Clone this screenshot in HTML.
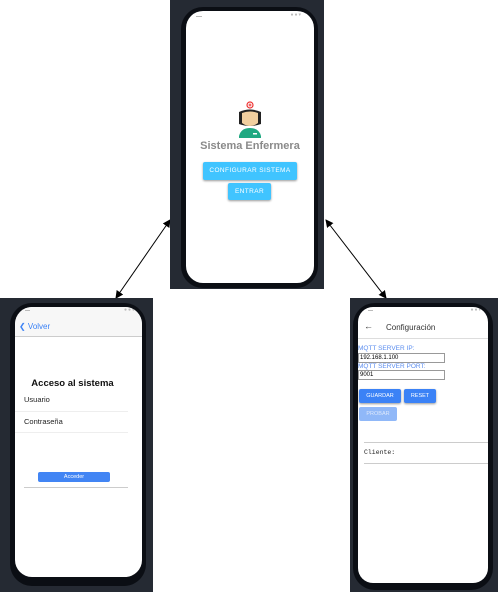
<!DOCTYPE html>
<html><head><meta charset="utf-8"><style>
body{margin:0;width:498px;height:592px;background:#fff;position:relative;overflow:hidden;font-family:"Liberation Sans",sans-serif}
.a{position:absolute}
.panel{position:absolute;background:#252a33}
.phone{position:absolute;background:#0b0e14;border-radius:22px}
.scr{position:absolute;background:#fff;border-radius:17px;overflow:hidden}
.dots{position:absolute;font-size:5px;color:#bbb;letter-spacing:1px}
</style></head><body>
<svg class="a" style="left:0;top:0" width="498" height="592">
<defs><marker id="m" markerWidth="8" markerHeight="8" refX="7" refY="4" orient="auto-start-reverse"><path d="M0,0 L8,4 L0,8 z" fill="#000"/></marker></defs>
<line x1="170" y1="220" x2="116" y2="298" stroke="#000" stroke-width="1" marker-start="url(#m)" marker-end="url(#m)"/>
<line x1="326" y1="220" x2="386" y2="298" stroke="#000" stroke-width="1" marker-start="url(#m)" marker-end="url(#m)"/>
</svg>

<!-- top -->
<div class="panel" style="left:170px;top:0;width:154px;height:289px"></div>
<div class="phone" style="left:181px;top:7px;width:137px;height:281px"></div>
<div class="scr" style="left:186px;top:11px;width:128px;height:272px">
 <div class="a" style="left:10px;top:5px;width:6px;height:1px;background:#bbb"></div>
 <div class="dots" style="right:12px;top:1px">●●▾</div>
 <svg class="a" style="left:50px;top:89px" width="28" height="40" viewBox="0 0 28 40">
  <circle cx="14" cy="5" r="3" fill="#fff" stroke="#e33" stroke-width="1.2"/>
  <path d="M12.5 5h3M14 3.5v3" stroke="#e33" stroke-width="1"/>
  <path d="M3 12q11-5 22 0v12q-11 4-22 0z" fill="#222"/>
  <path d="M6 13q8-3 16 0v10q-8 6-16 0z" fill="#f1cf9f"/>
  <path d="M3 36q2-8 11-8t11 8v2H3z" fill="#20a982"/>
  <rect x="17" y="33" width="4" height="1.5" fill="#fff"/>
 </svg>
 <div class="a" style="left:0;top:129px;width:128px;text-align:center;font-size:11px;font-weight:bold;color:#8a8a8a">Sistema Enfermera</div>
 <div class="a" style="left:17px;top:151px;width:94px;height:18px;background:#40c4ff;border-radius:2px;box-shadow:0 1px 2px #999;color:#fff;font-size:6.5px;line-height:18px;text-align:center;letter-spacing:.4px">CONFIGURAR SISTEMA</div>
 <div class="a" style="left:42px;top:172px;width:43px;height:17px;background:#40c4ff;border-radius:2px;box-shadow:0 1px 2px #999;color:#fff;font-size:6.5px;line-height:17px;text-align:center;letter-spacing:.4px">ENTRAR</div>
</div>

<!-- left -->
<div class="panel" style="left:0;top:298px;width:153px;height:294px"></div>
<div class="phone" style="left:10px;top:303px;width:136px;height:283px"></div>
<div class="scr" style="left:15px;top:307px;width:127px;height:270px">
 <div class="a" style="left:0;top:0;width:127px;height:29px;background:#f7f7f7;border-bottom:1px solid #ccc"></div>
 <div class="a" style="left:10px;top:3px;width:5px;height:1px;background:#bbb"></div>
 <div class="dots" style="right:6px;top:0">●●●</div>
 <div class="a" style="left:4px;top:15px;font-size:8px;color:#3b82f6">❮ Volver</div>
 <div class="a" style="left:0;top:71px;width:115px;text-align:center;font-size:9.5px;font-weight:bold;color:#111">Acceso al sistema</div>
 <div class="a" style="left:9px;top:88px;font-size:7.5px;color:#222">Usuario</div>
 <div class="a" style="left:0;top:104px;width:113px;height:1px;background:#eee"></div>
 <div class="a" style="left:9px;top:110px;font-size:7.5px;color:#222">Contraseña</div>
 <div class="a" style="left:0;top:125px;width:113px;height:1px;background:#eee"></div>
 <div class="a" style="left:23px;top:165px;width:72px;height:10px;background:#4285f4;border-radius:2px;color:#fff;font-size:5.5px;line-height:10px;text-align:center">Acceder</div>
 <div class="a" style="left:9px;top:180px;width:104px;height:1px;background:#ccc"></div>
</div>

<!-- right -->
<div class="panel" style="left:350px;top:298px;width:148px;height:294px"></div>
<div class="phone" style="left:353px;top:303px;width:140px;height:287px"></div>
<div class="scr" style="left:358px;top:307px;width:130px;height:276px;border-radius:15px">
 <div class="a" style="left:10px;top:3px;width:5px;height:1px;background:#bbb"></div>
 <div class="dots" style="right:6px;top:0">●●▾</div>
 <div class="a" style="left:6px;top:14px;font-size:9px;color:#333">←</div>
 <div class="a" style="left:28px;top:16px;font-size:8px;color:#333">Configuración</div>
 <div class="a" style="left:0;top:31px;width:130px;height:1px;background:#ddd"></div>
 <div class="a" style="left:0;top:38px;font-size:6.5px;color:#5b8def">MQTT SERVER IP:</div>
 <div class="a" style="left:0;top:46px;width:84px;height:8px;border:1px solid #999;font-size:6px;line-height:8px;padding-left:1px">192.168.1.100</div>
 <div class="a" style="left:0;top:56px;font-size:6.5px;color:#5b8def">MQTT SERVER PORT:</div>
 <div class="a" style="left:0;top:63px;width:84px;height:8px;border:1px solid #999;font-size:6px;line-height:8px;padding-left:1px">9001</div>
 <div class="a" style="left:1px;top:82px;width:42px;height:14px;background:#3b82f6;border-radius:2px;box-shadow:0 1px 2px #999;color:#fff;font-size:5.5px;line-height:14px;text-align:center">GUARDAR</div>
 <div class="a" style="left:46px;top:82px;width:32px;height:14px;background:#3b82f6;border-radius:2px;box-shadow:0 1px 2px #999;color:#fff;font-size:5.5px;line-height:14px;text-align:center">RESET</div>
 <div class="a" style="left:1px;top:100px;width:38px;height:14px;background:#90b8f8;border-radius:2px;color:#dde8fb;font-size:5.5px;line-height:14px;text-align:center">PROBAR</div>
 <div class="a" style="left:6px;top:135px;width:124px;height:1px;background:#ccc"></div>
 <div class="a" style="left:6px;top:142px;font-family:'Liberation Mono',monospace;font-size:6.5px;color:#222">Cliente:</div>
 <div class="a" style="left:6px;top:156px;width:124px;height:1px;background:#ccc"></div>
</div>
</body></html>
